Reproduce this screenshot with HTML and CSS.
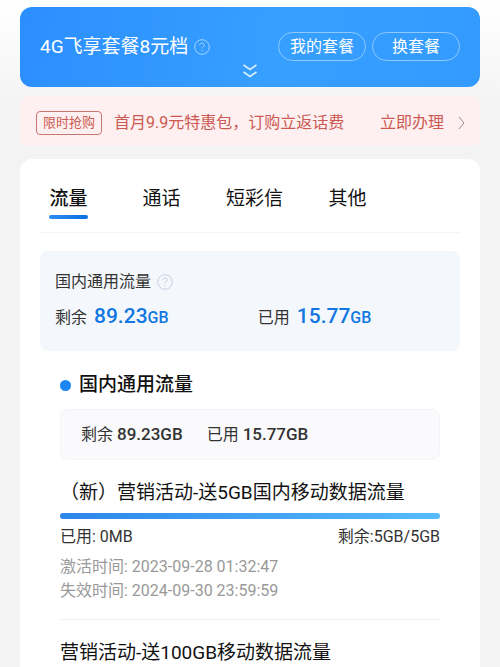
FILE: index.html
```html
<!DOCTYPE html>
<html lang="zh-CN">
<head>
    <meta charset="UTF-8">
    <meta name="viewport" content="width=device-width, initial-scale=1.0">
    <title>套餐余量</title>
    <link rel="stylesheet" href="styles.css">
</head>
<body>

    <!-- Current plan -->
    <header class="plan-card">
        <div class="plan-row">
            <h1 class="plan-name">4G飞享套餐8元档</h1>
            <svg class="help-icon" viewBox="0 0 16 16" aria-hidden="true">
                <circle cx="8" cy="8" r="7.3"/>
                <path d="M5.7 6.3c0-1.4 1-2.3 2.3-2.3s2.3.9 2.3 2.1c0 1.6-2.3 1.8-2.3 3.5M8 11v1.3"/>
            </svg>
            <div class="plan-actions">
                <button type="button" class="plan-button">我的套餐</button>
                <button type="button" class="plan-button">换套餐</button>
            </div>
        </div>
        <svg class="expand-icon" viewBox="0 0 14 14" aria-hidden="true">
            <path d="M.5 1L7 5.5 13.5 1M.5 8L7 12.5 13.5 8"/>
        </svg>
    </header>

    <!-- Promotion -->
    <a class="promo" href="#">
        <span class="promo-tag">限时抢购</span>
        <span>首月9.9元特惠包，订购立返话费</span>
        <span class="promo-action">立即办理</span>
        <svg class="promo-arrow" viewBox="0 0 7 14" aria-hidden="true">
            <path d="M1 1l5 6-5 6"/>
        </svg>
    </a>

    <main class="usage-card">
        <nav class="tabs">
            <a class="tab active" href="#">流量</a>
            <a class="tab" href="#">通话</a>
            <a class="tab" href="#">短彩信</a>
            <a class="tab" href="#">其他</a>
        </nav>

        <section class="summary">
            <div class="summary-title">
                国内通用流量
                <svg class="help-icon" viewBox="0 0 16 16" aria-hidden="true">
                    <circle cx="8" cy="8" r="7.3"/>
                    <path d="M5.7 6.3c0-1.4 1-2.3 2.3-2.3s2.3.9 2.3 2.1c0 1.6-2.3 1.8-2.3 3.5M8 11v1.3"/>
                </svg>
            </div>
            <div class="summary-values">
                <div class="summary-value">剩余 <strong>89.23<small>GB</small></strong></div>
                <div class="summary-value">已用 <strong>15.77<small>GB</small></strong></div>
            </div>
        </section>

        <section class="detail">
            <h2 class="detail-title">国内通用流量</h2>
            <div class="detail-total">
                <span>剩余 <b>89.23GB</b></span>
                <span>已用 <b>15.77GB</b></span>
            </div>

            <article class="package">
                <h3 class="package-name">（新）营销活动-送5GB国内移动数据流量</h3>
                <div class="bar"><div class="bar-fill" style="width: 100%"></div></div>
                <div class="package-usage">
                    <span>已用: 0MB</span>
                    <span>剩余:5GB/5GB</span>
                </div>
                <p class="package-date">激活时间: 2023-09-28 01:32:47</p>
                <p class="package-date">失效时间: 2024-09-30 23:59:59</p>
            </article>

            <article class="package">
                <h3 class="package-name">营销活动-送100GB移动数据流量</h3>
            </article>
        </section>
    </main>

</body>
</html>
```
FILE: styles.css
```css
* {
    box-sizing: border-box;
}

body {
    margin: 0;
    min-height: 100vh;
    padding: 7px 20px 0;
    display: flex;
    flex-direction: column;
    background: #f3f3f3 linear-gradient(#ffffff, #f3f3f3) no-repeat;
    background-size: 100% 110px;
    font-family: Roboto, "Noto Sans CJK SC", sans-serif;
    font-size: 16px;
    line-height: 24px;
    color: #333333;
}

h1, h2, h3, p {
    margin: 0;
    font-weight: 400;
}

a {
    color: inherit;
    text-decoration: none;
}

svg {
    display: block;
    flex: none;
    fill: none;
    stroke: currentColor;
}

.help-icon {
    width: 16px;
    height: 16px;
}

/* Plan card */
.plan-card {
    padding: 25px 20px 9px;
    border-radius: 12px;
    background: linear-gradient(100deg, #2b8eff, #369fff 55%, #339bff);
    color: #ffffff;
}

.plan-row {
    display: flex;
    align-items: center;
}

.plan-name {
    font-size: 19px;
    line-height: 24px;
}

.plan-card .help-icon {
    margin-left: 6px;
    color: #a3d3ff;
}

.plan-actions {
    display: flex;
    gap: 6px;
    margin-left: auto;
}

.plan-button {
    width: 88px;
    height: 29px;
    padding: 0;
    border: 1px solid #8ccaff;
    border-radius: 15px;
    background: transparent;
    color: #ffffff;
    font: inherit;
    line-height: 24px;
    cursor: pointer;
}

.expand-icon {
    width: 14px;
    height: 14px;
    margin: 3px auto 0;
    stroke-width: 1.6;
    color: #d9eeff;
}

/* Promotion */
.promo {
    display: flex;
    align-items: center;
    height: 50px;
    margin-top: 9px;
    padding: 4px 15px 0 16px;
    border-radius: 8px;
    background: #feeff0;
    color: #cc5a52;
}

.promo-tag {
    margin-right: 12px;
    padding: 0 6px;
    border: 1px solid #cc7672;
    border-radius: 4px;
    font-size: 13px;
    line-height: 22px;
}

.promo-action {
    margin-left: auto;
}

.promo-arrow {
    width: 7px;
    height: 14px;
    margin-left: 14px;
    color: #a08a8c;
}

/* Usage card */
.usage-card {
    flex: 1;
    margin-top: 13px;
    padding: 0 20px;
    border-radius: 12px 12px 0 0;
    background: #ffffff;
}

.tabs {
    display: grid;
    grid-template-columns: repeat(4, 1fr);
    justify-items: center;
    column-gap: 36px;
    margin-bottom: 18px;
    padding: 28px 84px 13px 0;
    border-bottom: 1px solid #f4f4f4;
}

.tab {
    font-size: 19px;
    color: #111111;
}

.tab::after {
    content: "";
    display: block;
    height: 4px;
    margin-top: 4px;
    border-radius: 2px;
}

.tab.active {
    font-weight: 500;
}

.tab.active::after {
    background: linear-gradient(90deg, #2b8cf5, #0b6fe0);
}

.summary {
    padding: 19px 15px;
    border-radius: 8px;
    background: #f4f8fd;
}

.summary-title {
    display: flex;
    align-items: center;
    gap: 6px;
}

.summary-title .help-icon {
    color: #c8cde2;
}

.summary-values {
    display: grid;
    grid-template-columns: 52% 1fr;
    margin-top: 8px;
}

.summary-value {
    line-height: 28px;
}

.summary-value strong {
    margin-left: 3px;
    font-size: 21px;
    font-weight: 500;
    color: #1277e0;
}

.summary-value small {
    font-size: 16px;
}

/* Detail list */
.detail {
    padding: 22px 20px 0;
}

.detail-title {
    display: flex;
    align-items: center;
    gap: 8px;
    font-size: 19px;
    font-weight: 500;
    color: #111111;
}

.detail-title::before {
    content: "";
    width: 11px;
    height: 11px;
    border-radius: 50%;
    background: #1c86f7;
}

.detail-total {
    display: flex;
    gap: 24px;
    margin-top: 12px;
    padding: 12px 20px;
    border: 1px solid #f5f5f7;
    border-radius: 8px;
    background: #fafafc;
}

.detail-total b {
    font-size: 17px;
    font-weight: 500;
}

.package {
    padding: 21px 0 16px;
}

.package + .package {
    border-top: 1px solid #f0f0f0;
}

.package-name {
    font-size: 19px;
    color: #111111;
}

.bar {
    margin: 8px 0 6px;
    border-radius: 3px;
    background: #eeeeee;
}

.bar-fill {
    height: 6px;
    border-radius: 3px;
    background: linear-gradient(90deg, #2c86ea, #56bbfb);
}

.package-usage {
    display: flex;
    justify-content: space-between;
    margin-bottom: 6px;
}

.package-date {
    color: #999999;
}
```
